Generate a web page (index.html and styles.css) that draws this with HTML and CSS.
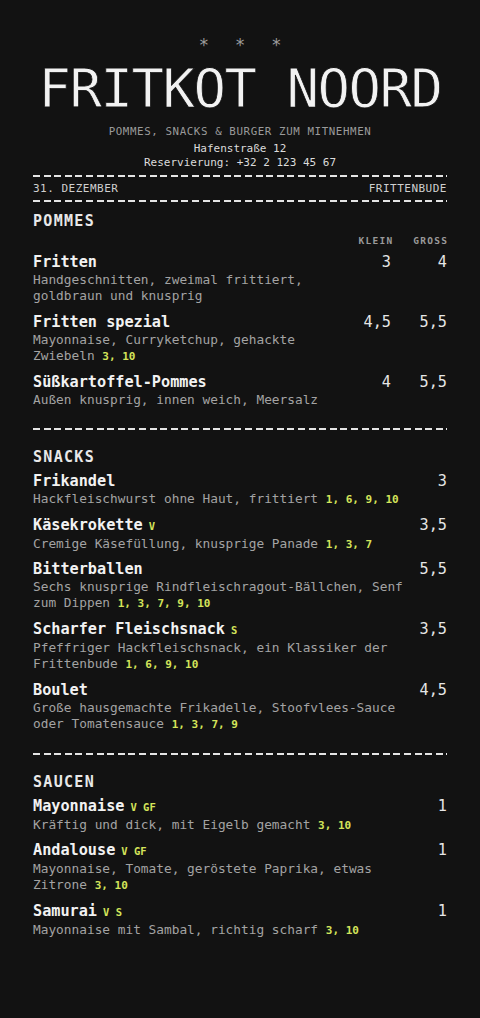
FILE: index.html
```html
<!DOCTYPE html>
<html lang="de">
<head>
	<meta charset="UTF-8">
	<title>Fritkot Noord</title>
	<link rel="stylesheet" href="styles.css">
</head>
<body>
	<header class="head">
		<div class="stars"><span>*</span><span>*</span><span>*</span></div>
		<h1 class="title">FRITKOT NOORD</h1>
		<p class="tagline">POMMES, SNACKS &amp; BURGER ZUM MITNEHMEN</p>
		<p class="addr">Hafenstraße 12</p>
		<p class="addr">Reservierung: +32 2 123 45 67</p>
	</header>
	<div class="rule"></div>
	<div class="dateline"><span>31. DEZEMBER</span><span>FRITTENBUDE</span></div>
	<div class="rule"></div>

	<section class="sect first">
		<h2>POMMES</h2>
		<div class="sizes"><span>KLEIN</span><span>GROSS</span></div>
		<div class="items">
			<div class="item two">
				<div class="name">Fritten</div>
				<div class="price">3</div>
				<div class="price">4</div>
				<p class="desc">Handgeschnitten, zweimal frittiert, goldbraun und knusprig</p>
			</div>
			<div class="item two">
				<div class="name">Fritten spezial</div>
				<div class="price">4,5</div>
				<div class="price">5,5</div>
				<p class="desc">Mayonnaise, Curryketchup, gehackte Zwiebeln <span class="allerg">3, 10</span></p>
			</div>
			<div class="item two">
				<div class="name">Süßkartoffel-Pommes</div>
				<div class="price">4</div>
				<div class="price">5,5</div>
				<p class="desc">Außen knusprig, innen weich, Meersalz</p>
			</div>
		</div>
	</section>
	<div class="rule"></div>

	<section class="sect">
		<h2>SNACKS</h2>
		<div class="items">
			<div class="item">
				<div class="name">Frikandel</div>
				<div class="price">3</div>
				<p class="desc">Hackfleischwurst ohne Haut, frittiert <span class="allerg">1, 6, 9, 10</span></p>
			</div>
			<div class="item">
				<div class="name">Käsekrokette<span class="tag">V</span></div>
				<div class="price">3,5</div>
				<p class="desc">Cremige Käsefüllung, knusprige Panade <span class="allerg">1, 3, 7</span></p>
			</div>
			<div class="item">
				<div class="name">Bitterballen</div>
				<div class="price">5,5</div>
				<p class="desc">Sechs knusprige Rindfleischragout-Bällchen, Senf zum Dippen <span class="allerg">1, 3, 7, 9, 10</span></p>
			</div>
			<div class="item">
				<div class="name">Scharfer Fleischsnack<span class="tag">S</span></div>
				<div class="price">3,5</div>
				<p class="desc">Pfeffriger Hackfleischsnack, ein Klassiker der Frittenbude <span class="allerg">1, 6, 9, 10</span></p>
			</div>
			<div class="item">
				<div class="name">Boulet</div>
				<div class="price">4,5</div>
				<p class="desc">Große hausgemachte Frikadelle, Stoofvlees-Sauce oder Tomatensauce <span class="allerg">1, 3, 7, 9</span></p>
			</div>
		</div>
	</section>
	<div class="rule"></div>

	<section class="sect">
		<h2>SAUCEN</h2>
		<div class="items">
			<div class="item">
				<div class="name">Mayonnaise<span class="tag">V GF</span></div>
				<div class="price">1</div>
				<p class="desc">Kräftig und dick, mit Eigelb gemacht <span class="allerg">3, 10</span></p>
			</div>
			<div class="item">
				<div class="name">Andalouse<span class="tag">V GF</span></div>
				<div class="price">1</div>
				<p class="desc">Mayonnaise, Tomate, geröstete Paprika, etwas Zitrone <span class="allerg">3, 10</span></p>
			</div>
			<div class="item">
				<div class="name">Samurai<span class="tag">V S</span></div>
				<div class="price">1</div>
				<p class="desc">Mayonnaise mit Sambal, richtig scharf <span class="allerg">3, 10</span></p>
			</div>
		</div>
	</section>
</body>
</html>
```

FILE: styles.css
```css
html {
	background: #121212;
}
body {
	margin: 0;
	padding: 0 33px;
	background: #121212;
	color: #ececec;
	font-family: "DejaVu Sans Mono", "Liberation Mono", monospace;
}
p, h1, h2 {
	margin: 0;
	font-weight: normal;
}
.head {
	padding-top: 35px;
	text-align: center;
}
.stars {
	display: flex;
	justify-content: center;
	gap: 26px;
	font-size: 17px;
	line-height: 20px;
	color: #9c9c9c;
}
.title {
	margin-top: 7px;
	font-size: 54px;
	line-height: 54px;
	letter-spacing: -1.5px;
	color: #f2f2f2;
	-webkit-text-stroke: 0.8px #121212;
}
.tagline {
	margin-top: 9px;
	margin-bottom: 3px;
	font-size: 10.8px;
	line-height: 14px;
	letter-spacing: 0.6px;
	color: #9a9a9a;
}
.addr {
	font-size: 11px;
	line-height: 14px;
	color: #dcdcdc;
}
.rule {
	height: 2px;
	background: repeating-linear-gradient(90deg, #e4e4e4 0 7px, transparent 7px 10.6px);
}
.head + .rule {
	margin-top: 5px;
}
.dateline {
	display: flex;
	justify-content: space-between;
	padding: 5px 0 4px;
	font-size: 11px;
	line-height: 14px;
	letter-spacing: 0.5px;
	color: #cfcfcf;
}
.sect {
	padding: 17px 0 21px;
}
.sect.first {
	padding-top: 9px;
	padding-bottom: 20px;
}
.sect h2 {
	margin-bottom: 4px;
	font-size: 15px;
	line-height: 20px;
	font-weight: bold;
	letter-spacing: 1.3px;
	color: #e8e8e8;
}
.sizes {
	display: flex;
	justify-content: flex-end;
	margin-bottom: 5px;
	font-size: 9.5px;
	line-height: 12px;
	font-weight: bold;
	letter-spacing: 1.3px;
	color: #9a9a9a;
}
.sizes span {
	width: 56px;
	text-align: right;
	margin-right: -1.3px;
}
.items {
	display: flex;
	flex-direction: column;
	gap: 7.7px;
}
.first .items {
	gap: 8px;
}
.item {
	display: grid;
	grid-template-columns: 1fr 40px;
}
.item.two {
	grid-template-columns: 1fr 56px 56px;
}
.name {
	font-size: 15.2px;
	line-height: 20px;
	font-weight: bold;
	color: #f2f2f2;
}
.price {
	font-size: 15.2px;
	line-height: 20px;
	text-align: right;
	color: #e6e6e6;
}
.desc {
	grid-column: 1;
	font-size: 12.8px;
	line-height: 16px;
	color: #a3a3a3;
}
.tag {
	margin-left: 6px;
	font-size: 10.5px;
	font-weight: bold;
	color: #d4e45a;
}
.allerg {
	font-size: 11px;
	line-height: 14px;
	font-weight: bold;
	color: #d4e45a;
}
```
